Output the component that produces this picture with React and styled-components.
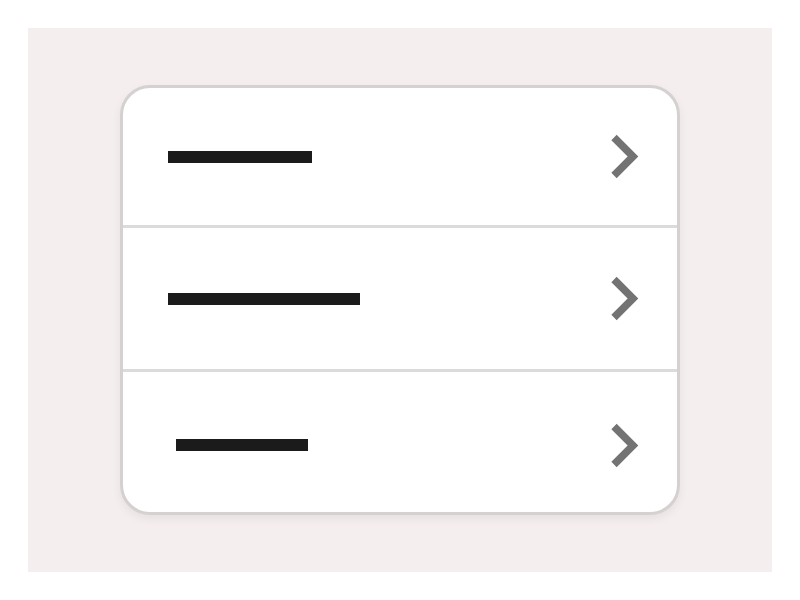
import React from 'react';
import styled, { createGlobalStyle } from 'styled-components';

const GlobalStyle = createGlobalStyle`
  html, body {
    margin: 0;
    padding: 0;
    background: #FFFFFF;
    font-family: 'Liberation Sans', Arial, sans-serif;
  }
`;

const Stage = styled.div`
  box-sizing: border-box;
  margin: 28px;
  width: 744px;
  height: 544px;
  background-color: #F4EFEE;
  display: flex;
  align-items: center;
  justify-content: center;
`;

const Card = styled.ul`
  box-sizing: border-box;
  width: 560px;
  height: 430px;
  margin: 0;
  padding: 0;
  list-style: none;
  display: flex;
  flex-direction: column;
  background-color: #FFFFFF;
  border: 3px solid #D5D1D0;
  border-radius: 30px;
  box-shadow: 0 4px 10px rgba(0, 0, 0, 0.06);
  overflow: hidden;
`;

const Row = styled.li`
  box-sizing: border-box;
  flex: ${(p) => (p.height ? `0 0 ${p.height}px` : '1')};
  display: flex;
  align-items: center;
  justify-content: space-between;
  padding: ${(p) => p.shift || 0}px 38px 0 ${(p) => p.indent}px;

  & + & {
    border-top: 3px solid #DCDADA;
  }
`;

const Line = styled.span`
  display: block;
  width: ${(p) => p.width}px;
  height: 12px;
  background-color: #1B1B1B;
`;

const Chevron = () => (
  <svg width="29" height="45" viewBox="0 0 29 45">
    <polyline
      points="4,3.5 23,22.5 4,41.5"
      fill="none"
      stroke="#737373"
      strokeWidth="7.5"
      strokeLinejoin="miter"
    />
  </svg>
);

const items = [
  { indent: 45, width: 144, height: 137 },
  { indent: 45, width: 192, height: 144 },
  { indent: 53, width: 132, shift: 6 },
];

const App = () => {
  return (
    <>
      <GlobalStyle />
      <Stage>
        <Card>
          {items.map((item, i) => (
            <Row key={i} indent={item.indent} height={item.height} shift={item.shift}>
              <Line width={item.width} />
              <Chevron />
            </Row>
          ))}
        </Card>
      </Stage>
    </>
  );
};

export default App;
